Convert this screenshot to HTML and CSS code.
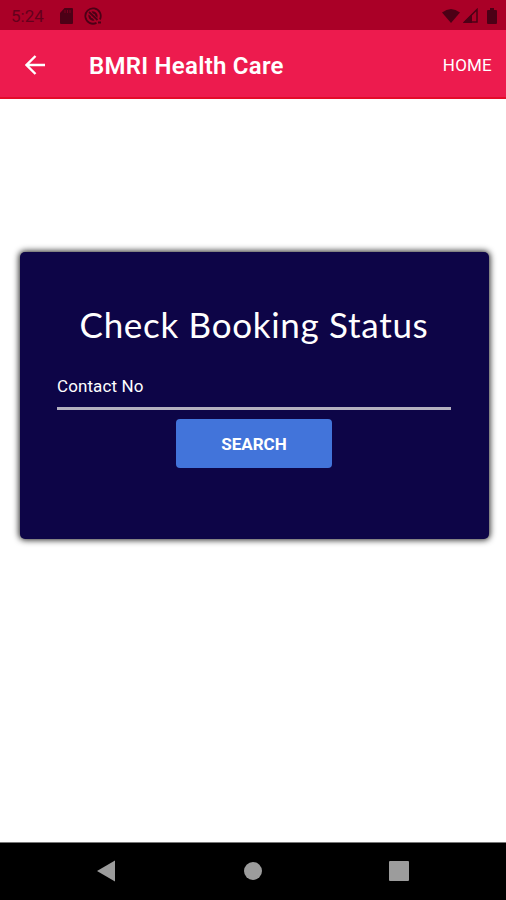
FILE: index.html
```
<!DOCTYPE html>
<html lang="en">
<head>
  <meta charset="UTF-8">
  <title>BMRI Health Care</title>
  <link rel="stylesheet" href="styles.css">
</head>
<body>
<div class="status-bar">
  <span class="time">5:24</span>
  <svg class="sd-card" width="13" height="16" viewBox="0 0 13 16"><path d="M4.5 0H12a1 1 0 0 1 1 1v14a1 1 0 0 1-1 1H1a1 1 0 0 1-1-1V5z"/><path class="slots" d="M5 2v3M7.5 2v3M10 2v3"/></svg>
  <svg class="sync" width="19" height="18" viewBox="0 0 19 18"><path class="ring" d="M12.500 15.900A7.700 7.700 0 1 1 15.900 12.500"/><path class="ring" d="M5 5l8.500 8"/><path d="M7.500 4.500a5 5 0 0 1 6 6.500l-2-2A3 3 0 0 0 9 6.500zM4.500 7.500l2 1.500a3 3 0 0 0 2.500 2.500l1.500 2a5 5 0 0 1-6-6z"/><path d="M14 14.500h3v2h-3z"/></svg>
  <div class="signals">
    <svg width="18" height="14" viewBox="0 0 18 14"><path d="M0 3.500Q9-3.500 18 3.500L9 14z"/></svg>
    <svg width="15" height="15" viewBox="0 0 15 15"><path class="cell" d="M1.500 14L14 1.500V14z"/><path d="M0 15L9 6v9z"/></svg>
    <svg class="battery" width="10" height="16" viewBox="0 0 10 16"><path d="M3 0h4v2h2a1 1 0 0 1 1 1v12a1 1 0 0 1-1 1H1a1 1 0 0 1-1-1V3a1 1 0 0 1 1-1h2z"/></svg>
  </div>
</div>
<header class="toolbar">
  <svg class="back" width="20" height="20" viewBox="0 0 20 20"><path d="M20 10H2M10.500 1L1.500 10l9 9"/></svg>
  <h1>BMRI Health Care</h1>
  <a class="home">HOME</a>
</header>
<main>
  <form class="card">
    <h2>Check Booking Status</h2>
    <label class="field">Contact No</label>
    <button type="button" class="search">SEARCH</button>
  </form>
</main>
<nav class="nav-bar">
  <svg width="18" height="22" viewBox="0 0 18 22"><path d="M0 11L18 .5v21z"/></svg>
  <svg class="circle" width="18" height="18" viewBox="0 0 18 18"><circle cx="9" cy="9" r="9"/></svg>
  <svg width="20" height="20" viewBox="0 0 20 20"><rect width="20" height="20" rx="1"/></svg>
</nav>
</body>
</html>
```

FILE: styles.css
```
* {
  box-sizing: border-box;
}
body {
  display: flex;
  flex-direction: column;
  height: 900px;
  margin: 0;
  background: white;
  font-family: Roboto, sans-serif;
}
h1, h2 {
  margin: 0;
}
.status-bar {
  display: flex;
  align-items: center;
  height: 30px;
  padding: 1px 9px 0 11px;
  background: #aa0027;
  color: #64001c;
  fill: #4c0016;
}
.time {
  width: 49px;
  font-size: 17px;
}
.slots {
  fill: none;
  stroke: #7c001f;
}
.sync {
  margin-left: 11px;
}
.ring {
  fill: none;
  stroke: #4c0016;
  stroke-width: 1.8;
}
.cell {
  fill: none;
  stroke: #4c0016;
  stroke-width: 1.5;
}
.signals {
  display: flex;
  align-items: center;
  gap: 3px;
  margin-left: auto;
}
.battery {
  margin-left: 6px;
}
.toolbar {
  display: flex;
  align-items: center;
  height: 69px;
  padding: 2px 14px 0 25px;
  background: #ed1b4e;
  border-bottom: 2px solid #e40b29;
  color: white;
}
.back {
  fill: none;
  stroke: white;
  stroke-width: 2.4;
}
h1 {
  margin-left: 44px;
  padding-top: 2px;
  font-size: 24px;
  font-weight: 600;
  letter-spacing: 0.25px;
}
.home {
  margin-left: auto;
  padding-top: 1px;
  font-size: 17px;
  letter-spacing: 0.2px;
}
main {
  flex: 1;
  padding: 153px 17px 0 20px;
}
.card {
  display: flex;
  flex-direction: column;
  height: 287px;
  padding: 50px 38px 0 37px;
  background: #0d0547;
  border-radius: 5px;
  box-shadow: 0 0 6px 1px #222;
  color: white;
}
h2 {
  align-self: center;
  font-family: Lato, sans-serif;
  font-size: 35px;
  font-weight: 400;
  letter-spacing: 0.7px;
  line-height: 44px;
  white-space: nowrap;
}
.field {
  height: 64px;
  padding-top: 30px;
  border-bottom: 3px solid #b4b1c0;
  font-size: 17px;
  letter-spacing: 0.1px;
  line-height: 20px;
}
.search {
  align-self: center;
  width: 156px;
  height: 49px;
  margin-top: 9px;
  background: #4274da;
  border: 0;
  border-radius: 4px;
  color: white;
  font-family: Roboto, sans-serif;
  font-size: 17px;
  font-weight: 700;
}
.nav-bar {
  display: flex;
  align-items: center;
  justify-content: space-between;
  height: 58px;
  padding: 0 97px 2px 97px;
  background: black;
  border-top: 1px solid #777;
  fill: #9c9c9c;
}
.circle {
  margin-left: 2px;
}
```
